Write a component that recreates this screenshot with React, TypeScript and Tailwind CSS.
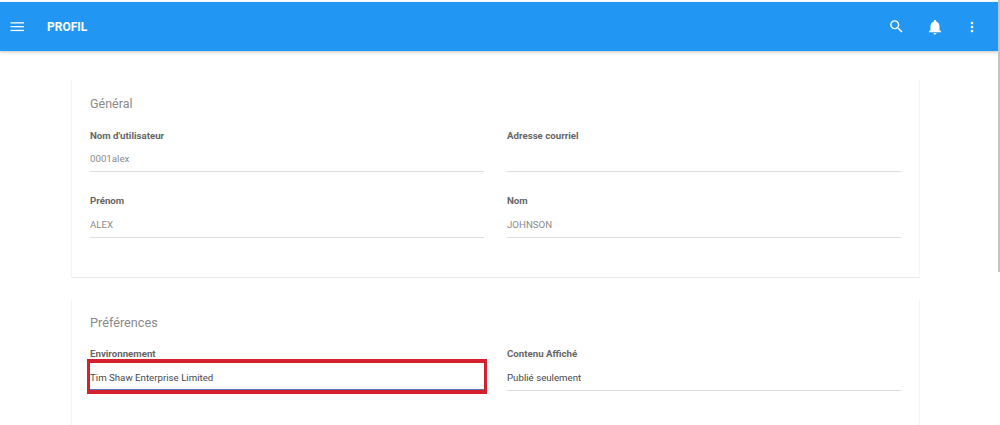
import React from "react";

function Field({ label, value, dark, focus, tall }: { label: string; value?: string; dark?: boolean; focus?: boolean; tall?: boolean }) {
  return (
    <div className="w-[394px]">
      <div className="h-[14px] text-[9.7px] leading-[14px] font-bold text-[#666666]">{label}</div>
      <div className={`${tall ? "mt-[10px]" : "mt-[9px]"} h-[14px] text-[9.7px] leading-[14px] ${dark ? "text-[#484848]" : "text-[#8a8a8a]"}`}>{value}</div>
      <div className={focus ? "mt-[4px] h-[2px] bg-[#5c74b8]" : "mt-[5px] h-px bg-[#dedede]"} />
    </div>
  );
}

export default function App() {
  return (
    <div className="relative h-[425px] w-[1000px] overflow-hidden bg-white font-['Roboto',sans-serif]">
      <div className="pt-[2px]">
        <header className="flex h-[49px] w-[998px] items-center bg-[#2196f3] shadow-[0_1px_3px_rgba(0,0,0,0.25)]">
          <svg className="ml-[10px] h-[14px] w-[14px]" viewBox="0 0 14 14" fill="#fff">
            <rect x="0.5" y="2.2" width="13.5" height="1.3" />
            <rect x="0.5" y="6" width="13.5" height="1.3" />
            <rect x="0.5" y="9.8" width="13.5" height="1.3" />
          </svg>
          <div className="ml-[23px] text-[12px] font-bold text-white">PROFIL</div>
          <div className="ml-auto flex items-center">
            <svg className="h-[17px] w-[17px]" viewBox="0 0 24 24" fill="#fff">
              <path d="M15.5 14h-.79l-.28-.27A6.47 6.47 0 0 0 16 9.5 6.5 6.5 0 1 0 9.5 16c1.61 0 3.09-.59 4.23-1.57l.27.28v.79l5 4.99L20.49 19l-4.99-5zm-6 0C7.01 14 5 11.99 5 9.5S7.01 5 9.5 5 14 7.01 14 9.5 11.99 14 9.5 14z" />
            </svg>
            <svg className="ml-[21px] h-[18px] w-[18px]" viewBox="0 0 24 24" fill="#fff">
              <path d="M12 22c1.1 0 2-.9 2-2h-4c0 1.1.9 2 2 2zm6-6v-5c0-3.07-1.63-5.64-4.5-6.32V4c0-.83-.67-1.5-1.5-1.5s-1.5.67-1.5 1.5v.68C7.64 5.36 6 7.92 6 11v5l-2 2v1h16v-1l-2-2z" />
            </svg>
            <svg className="ml-[20px] mr-[18px] h-[16px] w-[16px]" viewBox="0 0 24 24" fill="#fff">
              <path d="M12 8c1.1 0 2-.9 2-2s-.9-2-2-2-2 .9-2 2 .9 2 2 2zm0 2c-1.1 0-2 .9-2 2s.9 2 2 2 2-.9 2-2-.9-2-2-2zm0 6c-1.1 0-2 .9-2 2s.9 2 2 2 2-.9 2-2-.9-2-2-2z" />
            </svg>
          </div>
        </header>

        <main className="ml-[71px] w-[849px] pt-[29px]">
          <section className="h-[198px] border-x border-b border-x-[#f5f5f5] border-b-[#e6e6e6] px-[18px] pt-[15px]">
            <h2 className="text-[12.5px] leading-[18px] text-[#8a8a8a]">Général</h2>
            <div className="mt-[16px] grid grid-cols-[394px_394px] gap-x-[23px] gap-y-[22px]">
              <Field label="Nom d'utilisateur" value="0001alex" />
              <Field label="Adresse courriel" />
              <Field label="Prénom" value="ALEX" tall />
              <Field label="Nom" value="JOHNSON" tall />
            </div>
          </section>
          <section className="mt-[21px] h-[140px] border-x border-x-[#f5f5f5] px-[18px] pt-[15px]">
            <h2 className="text-[12.7px] leading-[18px] text-[#8a8a8a]">Préférences</h2>
            <div className="mt-[15px] grid grid-cols-[394px_394px] items-start gap-x-[23px]">
              <Field label="Environnement" value="Tim Shaw Enterprise Limited" dark focus tall />
              <Field label="Contenu Affiché" value="Publié seulement" dark tall />
            </div>
          </section>
        </main>
      </div>

      <div className="absolute left-[87px] top-[359px] h-[35px] w-[400px] border-x-[3px] border-y-[4px] border-[#d5202e]" />
      <div className="absolute right-0 top-0 h-[272px] w-[2px] bg-[#c4c4c4]" />
    </div>
  );
}
